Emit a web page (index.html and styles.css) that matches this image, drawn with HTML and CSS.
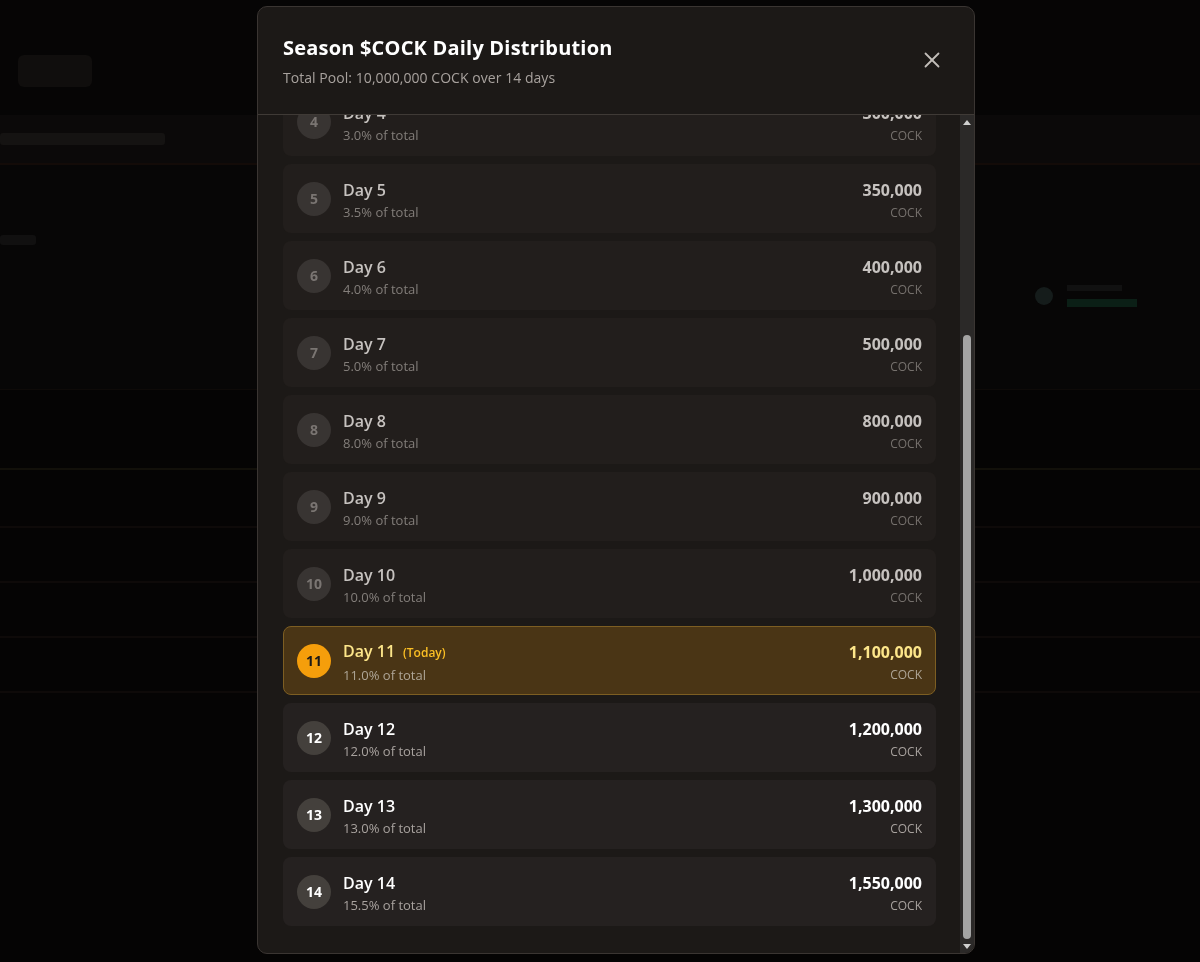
FILE: index.html
```html
<!DOCTYPE html>
<html lang="en">
<head>
<meta charset="utf-8">
<title>Season $COCK Daily Distribution</title>
<link rel="stylesheet" href="styles.css">
</head>
<body>
<div class="page">
  <div class="bg-top"><div class="bg-btn"></div></div>
  <div class="bg-band"><div class="bg-text"></div></div>
  <div class="bg-section">
    <div class="bg-label"></div>
    <div class="bg-stat"><div class="bg-dot"></div><div class="bg-lines"><div class="bg-l1"></div><div class="bg-l2"></div></div></div>
  </div>
  <div class="bg-strip"></div>
  <div class="bg-table">
    <div class="bg-row bg-row-head"></div>
    <div class="bg-row bg-row-a"></div>
    <div class="bg-row bg-row-b"></div>
    <div class="bg-row bg-row-c"></div>
  </div>
</div>

<div class="overlay">
  <div class="modal">
    <div class="modal-header">
      <div class="titles">
        <h2 class="title">Season $COCK Daily Distribution</h2>
        <p class="subtitle">Total Pool: 10,000,000 COCK over 14 days</p>
      </div>
      <button class="close" aria-label="Close">
        <svg width="16" height="16" viewBox="0 0 16 16" fill="none" stroke="currentColor" stroke-width="1.8" stroke-linecap="round"><path d="M1.5 1.5 14.5 14.5"/><path d="M14.5 1.5 1.5 14.5"/></svg>
      </button>
    </div>
    <div class="body-wrap">
      <div class="modal-body">
        <div class="list">
          <div class="row past"><div class="num">4</div><div class="info"><div class="day">Day 4</div><div class="pct">3.0% of total</div></div><div class="amt"><div class="val">300,000</div><div class="unit">COCK</div></div></div>
          <div class="row past"><div class="num">5</div><div class="info"><div class="day">Day 5</div><div class="pct">3.5% of total</div></div><div class="amt"><div class="val">350,000</div><div class="unit">COCK</div></div></div>
          <div class="row past"><div class="num">6</div><div class="info"><div class="day">Day 6</div><div class="pct">4.0% of total</div></div><div class="amt"><div class="val">400,000</div><div class="unit">COCK</div></div></div>
          <div class="row past"><div class="num">7</div><div class="info"><div class="day">Day 7</div><div class="pct">5.0% of total</div></div><div class="amt"><div class="val">500,000</div><div class="unit">COCK</div></div></div>
          <div class="row past"><div class="num">8</div><div class="info"><div class="day">Day 8</div><div class="pct">8.0% of total</div></div><div class="amt"><div class="val">800,000</div><div class="unit">COCK</div></div></div>
          <div class="row past"><div class="num">9</div><div class="info"><div class="day">Day 9</div><div class="pct">9.0% of total</div></div><div class="amt"><div class="val">900,000</div><div class="unit">COCK</div></div></div>
          <div class="row past"><div class="num">10</div><div class="info"><div class="day">Day 10</div><div class="pct">10.0% of total</div></div><div class="amt"><div class="val">1,000,000</div><div class="unit">COCK</div></div></div>
          <div class="row today"><div class="num">11</div><div class="info"><div class="day">Day 11<span class="tag">(Today)</span></div><div class="pct">11.0% of total</div></div><div class="amt"><div class="val">1,100,000</div><div class="unit">COCK</div></div></div>
          <div class="row future"><div class="num">12</div><div class="info"><div class="day">Day 12</div><div class="pct">12.0% of total</div></div><div class="amt"><div class="val">1,200,000</div><div class="unit">COCK</div></div></div>
          <div class="row future"><div class="num">13</div><div class="info"><div class="day">Day 13</div><div class="pct">13.0% of total</div></div><div class="amt"><div class="val">1,300,000</div><div class="unit">COCK</div></div></div>
          <div class="row future"><div class="num">14</div><div class="info"><div class="day">Day 14</div><div class="pct">15.5% of total</div></div><div class="amt"><div class="val">1,550,000</div><div class="unit">COCK</div></div></div>
        </div>
      </div>
      <div class="scrollbar" aria-hidden="true">
        <div class="sb-arrow"><svg width="8" height="6" viewBox="0 0 8 6"><path d="M0 6 4 1 8 6Z" fill="#cfcfcf"/></svg></div>
        <div class="sb-track"><div class="sb-thumb"></div></div>
        <div class="sb-arrow"><svg width="8" height="6" viewBox="0 0 8 6"><path d="M0 0 4 5 8 0Z" fill="#cfcfcf"/></svg></div>
      </div>
    </div>
  </div>
</div>
</body>
</html>
```

FILE: styles.css
```css
* { box-sizing: border-box; }
html, body { margin: 0; padding: 0; }
body {
  background: #050404;
  font-family: "Open Sans", "Noto Sans", "Liberation Sans", sans-serif;
  color: #fff;
  height: 962px;
  overflow: hidden;
}

/* dimmed background page */
.page { width: 1200px; }
.bg-top { height: 115px; padding: 55px 0 0 18px; background: #060505; }
.bg-btn { width: 74px; height: 32px; border-radius: 6px; background: #100e0d; }
.bg-band { height: 50px; background: #0b0909; border-bottom: 2px solid #130b08; padding: 18px 0 0 0; }
.bg-text { width: 165px; height: 12px; background: #151312; border-radius: 3px; }
.bg-section { height: 225px; background: #070606; padding: 70px 0 0 0; border-bottom: 1px solid #0e0a08; }
.bg-label { width: 36px; height: 10px; background: #111010; border-radius: 3px; }
.bg-stat { display: flex; gap: 14px; margin: 40px 0 0 1035px; align-items: center; }
.bg-dot { width: 18px; height: 18px; border-radius: 50%; background: #151c1b; }
.bg-lines { display: flex; flex-direction: column; gap: 8px; }
.bg-l1 { width: 55px; height: 6px; background: #111111; }
.bg-l2 { width: 70px; height: 8px; background: #0b1f16; }
.bg-strip { height: 80px; background: #050404; border-bottom: 2px solid #12100a; }
.bg-table { background: #050404; }
.bg-row { height: 55px; border-bottom: 2px solid #0e0a09; }
.bg-row-head { height: 58px; }

/* modal */
.overlay {
  position: fixed;
  inset: 0;
  display: flex;
  justify-content: center;
  align-items: flex-start;
  padding: 6px 0 0 32px;
}
.modal {
  width: 718px;
  height: 948px;
  background: #1c1917;
  border: 1px solid #3a3532;
  border-radius: 10px;
  display: flex;
  flex-direction: column;
  overflow: hidden;
}
.modal-header {
  height: 108px;
  flex-shrink: 0;
  border-bottom: 1px solid #3f3a36;
  display: flex;
  justify-content: space-between;
  align-items: flex-start;
  padding: 26px 24px 0 25px;
}
.title {
  margin: 0;
  font-size: 20px;
  line-height: 30px;
  font-weight: 700;
  letter-spacing: 0.2px;
  color: #fff;
}
.subtitle {
  margin: 5px 0 0;
  font-size: 14px;
  line-height: 20px;
  letter-spacing: 0.05px;
  color: #a8a29e;
}
.close {
  background: none;
  border: 0;
  padding: 0;
  margin: 15px 6px 0 0;
  color: #c2bdb9;
  width: 24px;
  height: 24px;
  display: flex;
  align-items: center;
  justify-content: center;
  cursor: pointer;
}

.body-wrap {
  flex: 1;
  min-height: 0;
  display: flex;
}
.modal-body {
  flex: 1;
  min-width: 0;
  overflow-y: auto;
  scrollbar-width: none;
  display: flex;
  flex-direction: column-reverse;
}

/* drawn scrollbar */
.scrollbar {
  width: 14px;
  flex-shrink: 0;
  background: #2b2928;
  display: flex;
  flex-direction: column;
}
.sb-arrow {
  height: 13px;
  display: flex;
  align-items: center;
  justify-content: center;
  padding-right: 1px;
}
.sb-track {
  flex: 1;
  display: flex;
  flex-direction: column;
  justify-content: flex-end;
  padding: 0 0 1px 3px;
}
.sb-thumb {
  width: 8px;
  height: 604px;
  border-radius: 4px;
  background: #a4a4a4;
}

.list {
  flex-shrink: 0;
  display: flex;
  flex-direction: column;
  gap: 8px;
  padding: 24px 24px 27px 25px;
}
.row {
  height: 69px;
  display: flex;
  align-items: center;
  padding: 0 13px;
  background: #24201e;
  border: 1px solid transparent;
  border-radius: 8px;
}
.num {
  width: 34px;
  height: 34px;
  border-radius: 50%;
  flex-shrink: 0;
  display: flex;
  align-items: center;
  justify-content: center;
  font-size: 14px;
  font-weight: 700;
  background: #44403c;
  color: #fff;
}
.info {
  flex: 1;
  margin-left: 12px;
  padding-top: 3px;
}
.day {
  font-size: 16px;
  line-height: 24px;
  font-weight: 600;
}
.pct {
  font-size: 13px;
  line-height: 21px;
  color: #a8a29e;
}
.amt {
  text-align: right;
  padding-top: 3px;
}
.val {
  font-size: 16px;
  line-height: 24px;
  font-weight: 700;
}
.unit {
  font-size: 12px;
  line-height: 21px;
  color: #a8a29e;
}

/* past days */
.past { background: #221e1c; }
.past .num { background: #383432; color: #7a7572; }
.past .day { color: #c6c2bf; }
.past .pct { color: #837e7a; }
.past .val { color: #c6c2bf; }
.past .unit { color: #76716d; }

/* today */
.today { background: #4a3515; border-color: #7d5e22; }
.today .num { background: #f59e0b; color: #1c1917; }
.today .day { color: #fde68a; }
.today .tag { font-size: 12px; font-weight: 600; color: #fbbf24; margin-left: 8px; }
.today .pct { color: #aea596; }
.today .val { color: #fde68a; }
.today .unit { color: #aea596; }

/* future */
.future { background: #252120; }
.future .day, .future .val { color: #fff; }
```
